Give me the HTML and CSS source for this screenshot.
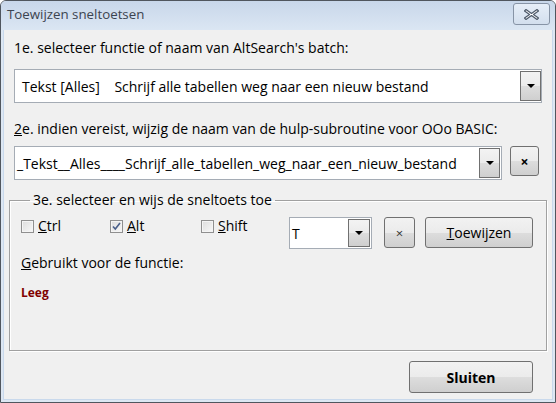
FILE: index.html
```html
<!DOCTYPE html>
<html>
<head>
<meta charset="utf-8">
<link rel="stylesheet" href="styles.css">
</head>
<body>
<div class="window">
  <div class="titlebar">
    <span class="title">Toewijzen sneltoetsen</span>
    <span class="close">
      <svg width="17" height="13" viewBox="0 0 17 13"><path d="M3 1.5 L8.5 5.5 L14 1.5 L15.5 3 L10.5 6.5 L15.5 10 L14 11.5 L8.5 7.5 L3 11.5 L1.5 10 L6.5 6.5 L1.5 3 Z" fill="#fff" stroke="#4e5a6a" stroke-width="1.2" stroke-linejoin="round"/></svg>
    </span>
  </div>
  <div class="client">
    <div class="label first">1e. selecteer functie of naam van AltSearch's batch:</div>
    <div class="combo combo1">
      <span class="combo-text pre">Tekst [Alles]    Schrijf alle tabellen weg naar een nieuw bestand</span>
      <span class="drop"><span class="arrow"></span></span>
    </div>
    <div class="label second"><u>2</u>e. indien vereist, wijzig de naam van de hulp-subroutine voor OOo BASIC:</div>
    <div class="row2">
      <div class="combo combo2">
        <span class="combo-text tight">_Tekst__Alles____Schrijf_alle_tabellen_weg_naar_een_nieuw_bestand</span>
        <span class="drop"><span class="arrow"></span></span>
      </div>
      <span class="btn xbtn bold-x">×</span>
    </div>
    <fieldset class="group">
      <legend>3e. selecteer en wijs de sneltoets toe</legend>
      <div class="keyrow">
        <span class="check ctrl"><span class="box"></span><span><u>C</u>trl</span></span>
        <span class="check alt"><span class="box"><svg width="9" height="9" viewBox="0 0 9 9"><path d="M1 4.5 L3.3 7 L8 1" fill="none" stroke="#4a5f8a" stroke-width="1.6"/></svg></span><span><u>A</u>lt</span></span>
        <span class="check shift"><span class="box"></span><span><u>S</u>hift</span></span>
        <div class="combo combo3">
          <span class="combo-text tight">T</span>
          <span class="drop"><span class="arrow"></span></span>
        </div>
        <span class="btn xbtn2">×</span>
        <span class="btn assign"><u>T</u>oewijzen</span>
      </div>
      <div class="used"><u>G</u>ebruikt voor de functie:</div>
      <div class="empty">Leeg</div>
    </fieldset>
    <div class="footer">
      <span class="btn close-btn">Sluiten</span>
    </div>
  </div>
</div>
</body>
</html>
```
FILE: styles.css
```css
html, body {
  margin: 0;
  padding: 0;
  background: #ffffff;
}
body {
  font-family: "Open Sans", "Noto Sans", sans-serif;
  font-size: 14px;
  color: #000;
}
.window {
  width: 556px;
  height: 403px;
  box-sizing: border-box;
  border: 1px solid #50565e;
  border-radius: 6px 6px 0 0;
  background: #dde7f3;
  display: flex;
  flex-direction: column;
  overflow: hidden;
}
.titlebar {
  height: 29px;
  flex: none;
  display: flex;
  align-items: center;
  justify-content: space-between;
  padding: 0 5px 0 6px;
  background: linear-gradient(#c8d7ea, #dbe6f3);
}
.title {
  color: #3c4450;
  font-size: 13.3px;
  margin-top: -3px;
}
.close {
  width: 35px;
  height: 20px;
  border: 1px solid #8794a6;
  border-radius: 3px;
  background: linear-gradient(#e6eef8, #d3dfee);
  display: flex;
  align-items: center;
  justify-content: center;
  margin-top: -3px;
}
.close svg { display: block; }
.client {
  flex: 1;
  margin: 0 2px 2px 2px;
  border: 1px solid #c9d9ec;
  border-top: none;
  background: #f0f0f0;
  padding: 0 10px;
  display: flex;
  flex-direction: column;
}
.label {
  line-height: 16px;
  height: 16px;
  white-space: nowrap;
}
.first { margin-top: 10px; }
.second { margin-top: 18px; }
.combo {
  box-sizing: border-box;
  border: 1px solid #a5acb5;
  background: #fff;
  display: flex;
  align-items: center;
  padding: 1px 0 1px 0;
}
.combo1 {
  margin-top: 13px;
  height: 34px;
  width: 528px;
}
.combo-text {
  flex: 1;
  white-space: nowrap;
  overflow: hidden;
  padding-left: 7px;
}
.pre { white-space: pre; }
.tight { padding-left: 2px; }
.drop {
  align-self: stretch;
  width: 21px;
  box-sizing: border-box;
  border: 1px solid #707070;
  background: linear-gradient(#f3f3f3 0%, #ebebeb 50%, #dddddd 51%, #cfcfcf 100%);
  display: flex;
  align-items: center;
  justify-content: center;
}
.arrow {
  width: 0;
  height: 0;
  border-left: 4px solid transparent;
  border-right: 4px solid transparent;
  border-top: 4px solid #000;
}
.row2 {
  margin-top: 9px;
  display: flex;
  align-items: flex-start;
  gap: 8px;
}
.combo2 {
  width: 488px;
  height: 34px;
}
.combo2 .drop { margin-right: 1px; }
.btn {
  box-sizing: border-box;
  border: 1px solid #707070;
  border-radius: 3px;
  background: linear-gradient(#f2f2f2 0%, #ebebeb 50%, #dddddd 51%, #cfcfcf 100%);
  display: flex;
  align-items: center;
  justify-content: center;
  white-space: nowrap;
}
.xbtn {
  width: 29px;
  height: 30px;
}
.bold-x {
  font-weight: bold;
  font-size: 14px;
}
.group {
  margin: 12px -5px 0 -5px;
  padding: 9px 13px 49px 11px;
  border: 1px solid #a0a0a0;
  box-shadow: inset 1px 1px #fff, 1px 1px #fff;
  min-width: 0;
}
.group legend {
  padding: 0 3px;
  margin-left: 9px;
  line-height: 16px;
}
.keyrow {
  display: flex;
  align-items: flex-start;
  height: 32px;
}
.check {
  display: flex;
  align-items: center;
  gap: 4px;
  margin-top: 1px;
  line-height: 16px;
}
.ctrl { width: 89px; }
.alt { width: 91px; }
.shift { width: 88px; }
.box {
  width: 13px;
  height: 13px;
  box-sizing: border-box;
  border: 1px solid #8f8f8f;
  background: linear-gradient(135deg, #dcdcdc, #f8f8f8);
  box-shadow: inset 0 0 0 1px #f4f4f4;
  display: flex;
  align-items: center;
  justify-content: center;
}
.box svg { display: block; }
.combo3 {
  width: 83px;
  height: 32px;
}
.combo3 .drop { width: 22px; margin-right: 1px; }
.xbtn2 {
  width: 31px;
  height: 31px;
  margin-left: 12px;
  color: #333;
  font-size: 13px;
}
.assign {
  width: 108px;
  height: 31px;
  margin-left: 10px;
}
.used {
  margin-top: 6px;
  line-height: 16px;
}
.empty {
  margin-top: 14px;
  line-height: 16px;
  font-weight: bold;
  font-size: 12px;
  color: #800000;
}
.footer {
  display: flex;
  justify-content: flex-end;
  padding-right: 9px;
  margin-top: 10px;
}
.close-btn {
  width: 124px;
  height: 32px;
  font-weight: bold;
}
```
